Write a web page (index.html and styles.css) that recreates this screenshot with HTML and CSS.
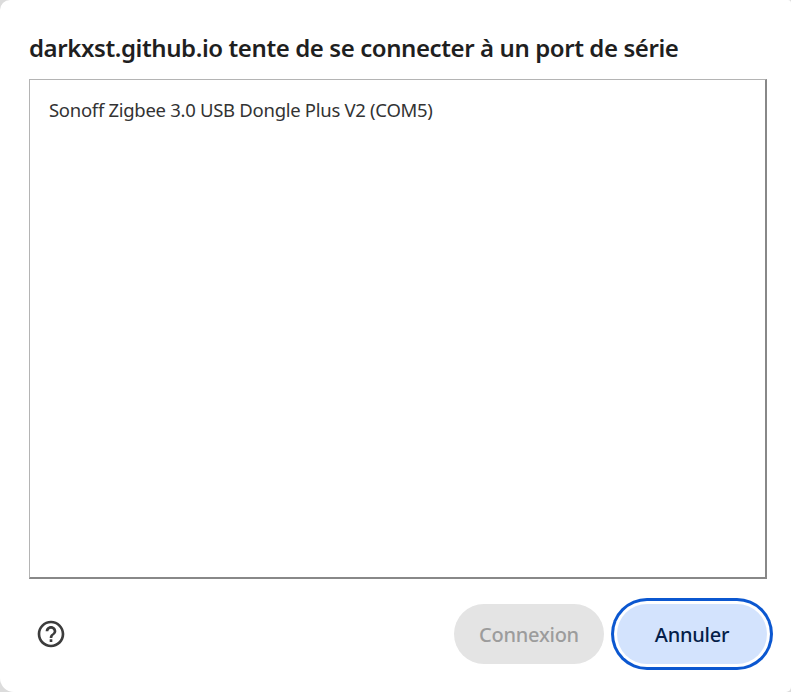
FILE: index.html
```html
<!DOCTYPE html>
<html lang="fr">
<head>
    <meta charset="UTF-8">
    <meta name="viewport" content="width=device-width, initial-scale=1.0">
    <title>Port de série</title>
    <link rel="stylesheet" href="styles.css">
</head>
<body>
    <div class="dialog">
        <h1 class="title">darkxst.github.io tente de se connecter à un port de série</h1>

        <ul class="port-list">
            <li class="port">Sonoff Zigbee 3.0 USB Dongle Plus V2 (COM5)</li>
        </ul>

        <div class="footer">
            <!-- Help icon -->
            <svg class="help" viewBox="0 0 24 24" aria-label="Aide">
                <path d="M11 18h2v-2h-2v2zm1-16C6.48 2 2 6.48 2 12s4.480 10 10 10 10-4.480 10-10S17.520 2 12 2zm0 18c-4.410 0-8-3.590-8-8s3.590-8 8-8 8 3.590 8 8-3.590 8-8 8zm0-14c-2.210 0-4 1.790-4 4h2c0-1.100.9-2 2-2s2 .9 2 2c0 2-3 1.750-3 5h2c0-2.250 3-2.500 3-5 0-2.210-1.790-4-4-4z"/>
            </svg>
            <div class="buttons">
                <button class="btn connect" disabled>Connexion</button>
                <button class="btn cancel">Annuler</button>
            </div>
        </div>
    </div>
</body>
</html>
```
FILE: styles.css
```css
body {
    margin: 0;
    background-color: #dcdcdc;
    font-family: "Noto Sans", "Open Sans", sans-serif;
}

.dialog {
    box-sizing: border-box;
    width: 791px;
    height: 692px;
    padding: 30px 18px 22px 29px;
    background-color: #fff;
    border-radius: 10px 3px 5px 14px;
    overflow: hidden;
}

.title {
    margin: 0;
    height: 49px;
    line-height: 36px;
    font-size: 24px;
    font-weight: 600;
    letter-spacing: -0.41px;
    color: #1f1f1f;
    white-space: nowrap;
}

.port-list {
    box-sizing: border-box;
    width: 738px;
    height: 500px;
    margin: 0;
    padding: 16px 19px;
    border: 1px solid #b4b4b4;
    border-right: 2px solid #888;
    border-bottom: 2px solid #888;
    list-style: none;
}

.port {
    line-height: 28px;
    font-size: 18.5px;
    letter-spacing: -0.29px;
    color: #333;
    white-space: nowrap;
}

.footer {
    display: flex;
    align-items: center;
    justify-content: space-between;
    height: 72px;
    margin-top: 19px;
}

.help {
    width: 32px;
    height: 32px;
    margin: 0 0 1px 5.5px;
    fill: #3c3c3c;
}

.buttons {
    display: flex;
    align-items: center;
    gap: 13px;
}

.btn {
    height: 60px;
    padding: 0;
    border: none;
    border-radius: 30px;
    font-family: inherit;
    font-size: 20px;
    font-weight: 500;
    letter-spacing: -0.25px;
}

.connect {
    width: 150px;
    background-color: #e4e4e4;
    color: #9c9c9c;
}

.cancel {
    width: 150px;
    margin-right: 6px;
    background-color: #d3e3fd;
    color: #041e49;
    box-shadow: 0 0 0 3px #fff, 0 0 0 6px #0b57d0;
}
```
